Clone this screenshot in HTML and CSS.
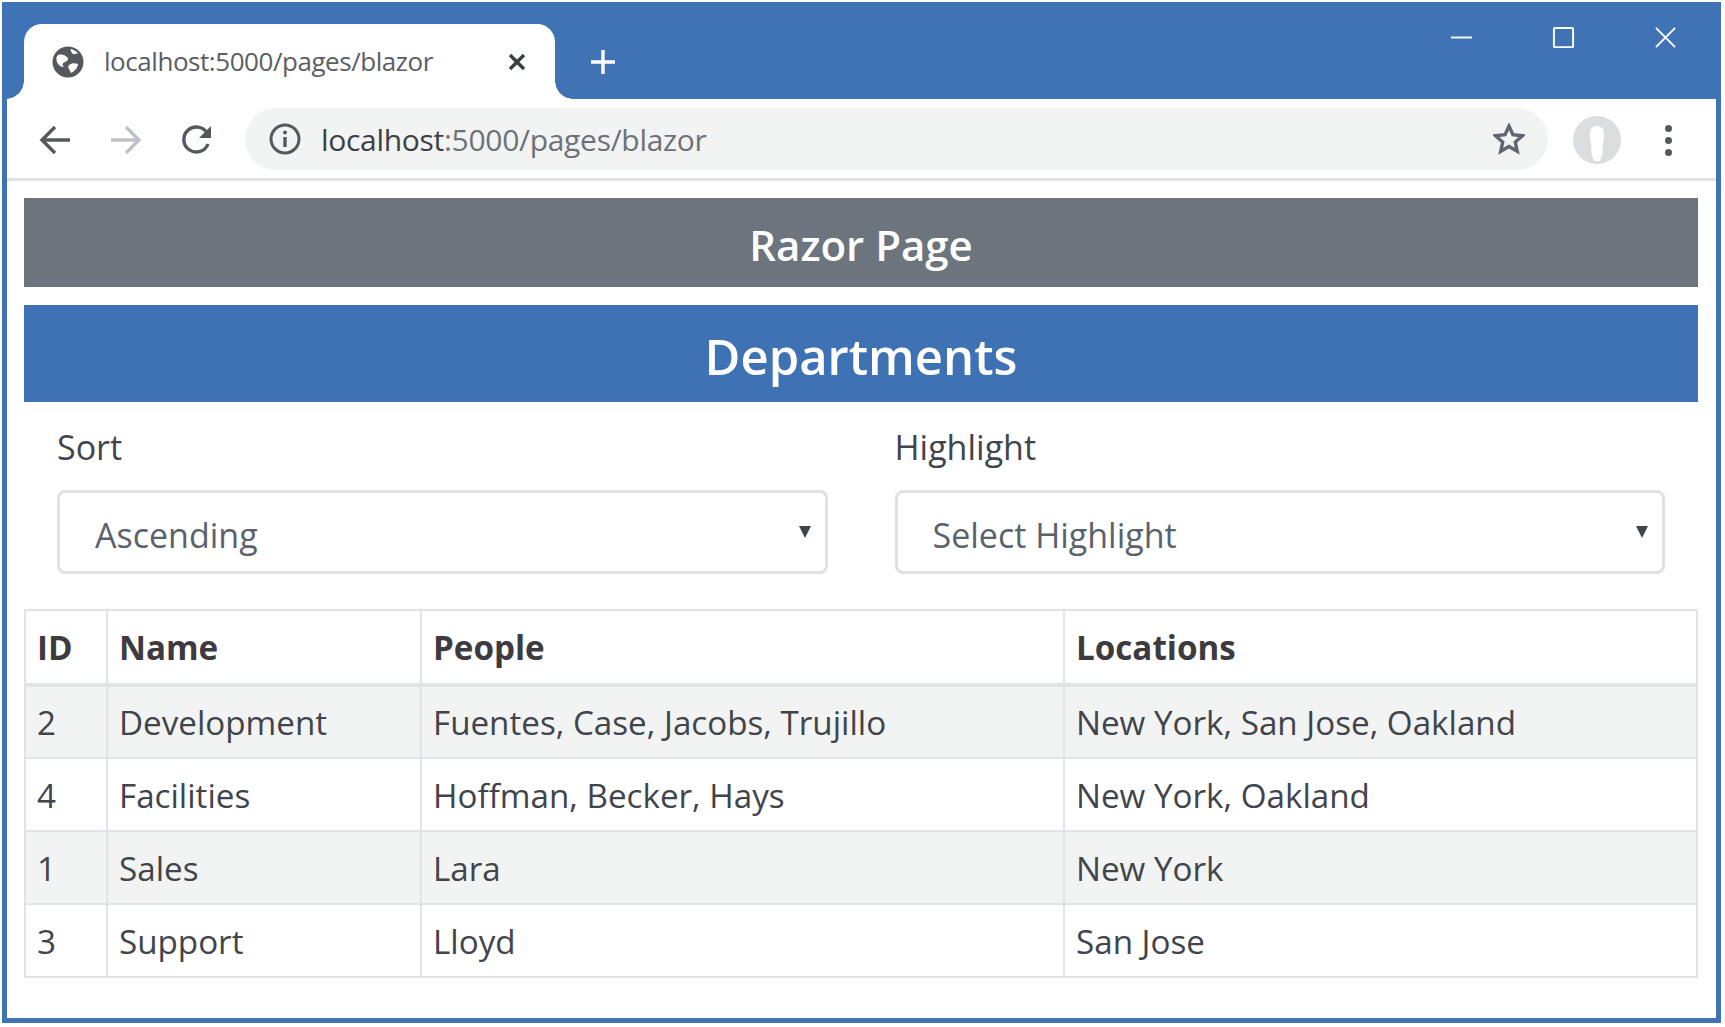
FILE: index.html
```html
<!DOCTYPE html>
<html lang="en">
<head>
  <meta charset="UTF-8">
  <title>localhost:5000/pages/blazor</title>
  <link rel="stylesheet" href="styles.css">
</head>
<body>

<div class="window">
  <!-- Tab strip -->
  <div class="tabstrip">
    <div class="tab">
      <svg class="favicon" viewBox="0 0 32 32">
        <circle cx="16" cy="16" r="15.5" fill="#55585d"/>
        <path d="M6 9c4-1 7 0 9 2s1 4-2 5-3 3-1 5c-3 0-6-2-7-5s-1-5 1-7zM17 19c3-2 6-2 9-1 0 3-3 7-7 9-1-3-4-6-2-8zM19 3c3 1 5 2 7 4-2 1-5 2-6 0s-2-3-1-4z" fill="#fff"/>
      </svg>
      <span class="tab-title">localhost:5000/pages/blazor</span>
      <svg class="tab-close" viewBox="0 0 20 20">
        <path d="M3 3l14 14M17 3L3 17" stroke="#3c4043" stroke-width="3.4" fill="none"/>
      </svg>
    </div>
    <svg class="new-tab" viewBox="0 0 26 26">
      <path d="M13 1v24M1 13h24" stroke="#fff" stroke-width="3.4" fill="none"/>
    </svg>
    <div class="window-controls">
      <svg viewBox="0 0 24 24"><path d="M1 12h22" stroke="#fff" stroke-width="2" fill="none"/></svg>
      <svg viewBox="0 0 24 24"><rect x="2" y="2" width="20" height="20" rx="1" stroke="#fff" stroke-width="2" fill="none"/></svg>
      <svg viewBox="0 0 24 24"><path d="M2 2l20 20M22 2L2 22" stroke="#fff" stroke-width="2" fill="none"/></svg>
    </div>
  </div>

  <!-- Toolbar -->
  <div class="toolbar">
    <svg class="nav-icon" viewBox="0 0 32 32">
      <path d="M31 16H4M16 3L3 16l13 13" stroke="#55585d" stroke-width="3.4" fill="none"/>
    </svg>
    <svg class="nav-icon" viewBox="0 0 32 32">
      <path d="M1 16h27M16 3l13 13-13 13" stroke="#bfc1c6" stroke-width="3.4" fill="none"/>
    </svg>
    <svg class="nav-icon" viewBox="0 0 32 32">
      <path d="M27 20a12.500 12.500 0 1 1-1-11" stroke="#55585d" stroke-width="3.4" fill="none"/>
      <path d="M30 2v12H18z" fill="#55585d"/>
    </svg>
    <div class="omnibox">
      <svg class="info-icon" viewBox="0 0 32 32">
        <circle cx="16" cy="16" r="14" stroke="#55585d" stroke-width="3" fill="none"/>
        <path d="M16 14v10" stroke="#55585d" stroke-width="3.400" fill="none"/>
        <circle cx="16" cy="9.500" r="2" fill="#55585d"/>
      </svg>
      <span class="url"><span class="url-host">localhost</span>:5000/pages/blazor</span>
      <svg class="star" viewBox="0 0 32 32">
        <path d="M16 3l3.900 8.700 9.500 1-7.100 6.300 2 9.300-8.300-4.800-8.300 4.800 2-9.300-7.100-6.300 9.500-1z" stroke="#5f6670" stroke-width="3.400" fill="none"/>
      </svg>
    </div>
    <svg class="avatar" viewBox="0 0 48 48">
      <circle cx="24" cy="24" r="24" fill="#dcdde1"/>
      <path d="M24 10c6 0 8 5 7 12-1 5-2 8-1 14l-3 9h-6l-3-9c1-6 0-9-1-14-1-7 1-12 7-12z" fill="#fff"/>
    </svg>
    <div class="menu-dots"><i></i><i></i><i></i></div>
  </div>

  <!-- Page -->
  <div class="page">
    <div class="banner banner-gray">Razor Page</div>
    <div class="banner banner-blue">Departments</div>

    <div class="filters">
      <div class="filter">
        <label for="sortSelect">Sort</label>
        <div class="select-box">
          <select id="sortSelect">
            <option>Ascending</option>
            <option>Descending</option>
          </select>
        </div>
      </div>
      <div class="filter">
        <label for="highlightSelect">Highlight</label>
        <div class="select-box">
          <select id="highlightSelect">
            <option>Select Highlight</option>
            <option>New York</option>
            <option>San Jose</option>
            <option>Oakland</option>
          </select>
        </div>
      </div>
    </div>

    <table class="dept-table">
      <colgroup>
        <col class="col-id"><col class="col-name"><col class="col-people"><col>
      </colgroup>
      <thead>
        <tr><th>ID</th><th>Name</th><th>People</th><th>Locations</th></tr>
      </thead>
      <tbody>
        <tr><td>2</td><td>Development</td><td>Fuentes, Case, Jacobs, Trujillo</td><td>New York, San Jose, Oakland</td></tr>
        <tr><td>4</td><td>Facilities</td><td>Hoffman, Becker, Hays</td><td>New York, Oakland</td></tr>
        <tr><td>1</td><td>Sales</td><td>Lara</td><td>New York</td></tr>
        <tr><td>3</td><td>Support</td><td>Lloyd</td><td>San Jose</td></tr>
      </tbody>
    </table>
  </div>
</div>

</body>
</html>
```

FILE: styles.css
```css
body {
  margin: 0;
  background: white;
  font-family: "Open Sans", "Noto Sans", sans-serif;
  color: #41454b;
}
.window {
  margin: 2px 4px 4px 2px;
  height: 1021px;
  box-sizing: border-box;
  border: solid #4073b5;
  border-width: 0 5px 5px;
  display: flex;
  flex-direction: column;
  background: white;
}

/* Tab strip */
.tabstrip {
  height: 97px;
  margin: 0 -5px;
  padding: 22px 44px 0 22px;
  box-sizing: border-box;
  background: #4073b5;
  display: flex;
  align-items: flex-start;
}
.tab {
  position: relative;
  width: 531px;
  height: 75px;
  padding: 0 28px 0 28px;
  box-sizing: border-box;
  background: white;
  border-radius: 18px 18px 0 0;
  display: flex;
  align-items: center;
}
.tab::before, .tab::after {
  content: "";
  position: absolute;
  bottom: 0;
  width: 18px;
  height: 18px;
  background: radial-gradient(circle at 0 0, #4073b5 17.500px, white 18px);
}
.tab::before {
  left: -18px;
}
.tab::after {
  right: -18px;
  transform: scaleX(-1);
}
.favicon {
  width: 32px;
  height: 32px;
  flex: none;
}
.tab-title {
  margin: 0 0 2px 20px;
  font-size: 26px;
  letter-spacing: -0.45px;
  color: #5a5e64;
  white-space: nowrap;
  flex: 1;
}
.tab-close {
  width: 20px;
  height: 20px;
  flex: none;
}
.new-tab {
  width: 26px;
  height: 26px;
  margin: 25px 0 0 35px;
  flex: none;
}
.window-controls {
  margin-left: auto;
  display: flex;
  gap: 79px;
  padding-top: 2px;
}
.window-controls svg {
  width: 23px;
  height: 23px;
}

/* Toolbar */
.toolbar {
  height: 82px;
  padding: 3px 38px 0 32px;
  box-sizing: border-box;
  border-bottom: 3px solid #e0e2e6;
  display: flex;
  align-items: center;
}
.nav-icon {
  width: 32px;
  height: 32px;
  margin-right: 39px;
  flex: none;
}
.omnibox {
  width: 1303px;
  height: 62px;
  margin: 0 0 2px -7px;
  padding: 0 23px 0 24px;
  box-sizing: border-box;
  background: #f2f4f4;
  border-radius: 31px;
  display: flex;
  align-items: center;
}
.info-icon {
  width: 32px;
  height: 32px;
  flex: none;
}
.url {
  margin-left: 20px;
  font-size: 30px;
  letter-spacing: -0.3px;
  color: #6d7178;
  flex: 1;
  white-space: nowrap;
}
.url-host {
  color: #3c4043;
}
.star {
  width: 32px;
  height: 32px;
  flex: none;
}
.avatar {
  width: 48px;
  height: 48px;
  margin-left: 25px;
  flex: none;
}
.menu-dots {
  margin-left: 44px;
  display: flex;
  flex-direction: column;
  gap: 5px;
}
.menu-dots i {
  width: 7px;
  height: 7px;
  border-radius: 50%;
  background: #55585d;
}

/* Page */
.page {
  flex: 1;
  padding: 17px 18px 0 17px;
}
.banner {
  color: white;
  font-weight: 600;
  text-align: center;
  display: flex;
  align-items: center;
  justify-content: center;
  box-sizing: border-box;
}
.banner-gray {
  height: 89px;
  padding-top: 3px;
  background: #6c757d;
  font-size: 42px;
}
.banner-blue {
  height: 97px;
  margin-top: 18px;
  padding-top: 5px;
  background: #3f72b5;
  font-size: 49px;
}
.filters {
  display: grid;
  grid-template-columns: 1fr 1fr;
  gap: 67px;
  padding: 0 33px;
  margin-top: 23px;
}
.filter label {
  display: block;
  font-size: 34px;
  line-height: 44px;
  margin-bottom: 21px;
}
.select-box {
  position: relative;
}
.select-box::after {
  content: "";
  position: absolute;
  top: 36px;
  right: 17px;
  border: solid transparent;
  border-width: 12px 6px 0;
  border-top-color: #41454b;
}
select {
  width: 100%;
  height: 84px;
  padding: 5px 0 0 35px;
  box-sizing: border-box;
  appearance: none;
  background: white;
  border: 3px solid #dfe1e5;
  border-radius: 8px;
  font-family: inherit;
  font-size: 34px;
  color: #5a626b;
}
.dept-table {
  width: 100%;
  margin-top: 35px;
  border-collapse: collapse;
  table-layout: fixed;
  font-size: 33.200px;
}
.col-id { width: 82px; }
.col-name { width: 314px; }
.col-people { width: 643px; }
.dept-table th, .dept-table td {
  height: 73px;
  padding: 1px 11px 0;
  box-sizing: border-box;
  border: 2px solid #e1e3e7;
  text-align: left;
  white-space: nowrap;
}
.dept-table th {
  height: 75px;
  font-weight: 700;
  border-bottom-width: 4px;
  color: #3d3a40;
}
.dept-table tbody tr:nth-child(odd) {
  background: #f2f3f3;
}
```
